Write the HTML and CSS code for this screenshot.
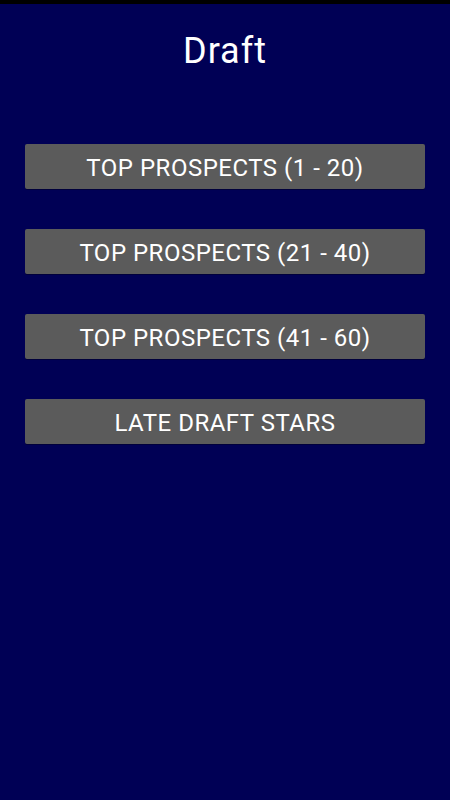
FILE: index.html
```html
<!DOCTYPE html>
<html lang="en">
<head>
    <meta charset="UTF-8">
    <meta name="viewport" content="width=device-width, initial-scale=1.0">
    <title>Draft</title>
    <link rel="stylesheet" href="styles.css">
</head>
<body>
<div class="status_bar"></div>
<div class="screen">
    <h1 class="title">Draft</h1>
    <div class="menu">
        <button class="menu_button">TOP PROSPECTS (1 - 20)</button>
        <button class="menu_button">TOP PROSPECTS (21 - 40)</button>
        <button class="menu_button">TOP PROSPECTS (41 - 60)</button>
        <button class="menu_button">LATE DRAFT STARS</button>
    </div>
</div>
</body>
</html>
```

FILE: styles.css
```css
html, body {
    margin: 0;
    height: 100%;
}
body {
    font-family: Roboto, "Liberation Sans", sans-serif;
    background-color: #000055;
    color: #fff;
}
.status_bar {
    height: 4px;
    background-color: #000;
}
.screen {
    padding: 26px 25px 0;
}
.title {
    margin: 0;
    font-size: 36px;
    font-weight: normal;
    line-height: 42px;
    letter-spacing: 1px;
    text-align: center;
}
.menu {
    display: flex;
    flex-direction: column;
    gap: 40px;
    margin-top: 72px;
}
.menu_button {
    height: 45px;
    padding: 2px 0 0;
    border: none;
    border-radius: 2px;
    background-color: #5b5b5b;
    color: #fff;
    font-family: inherit;
    font-size: 24px;
    letter-spacing: 0.5px;
    box-shadow: 0 1px 0 rgba(0, 0, 0, 0.3);
    cursor: pointer;
}
```
